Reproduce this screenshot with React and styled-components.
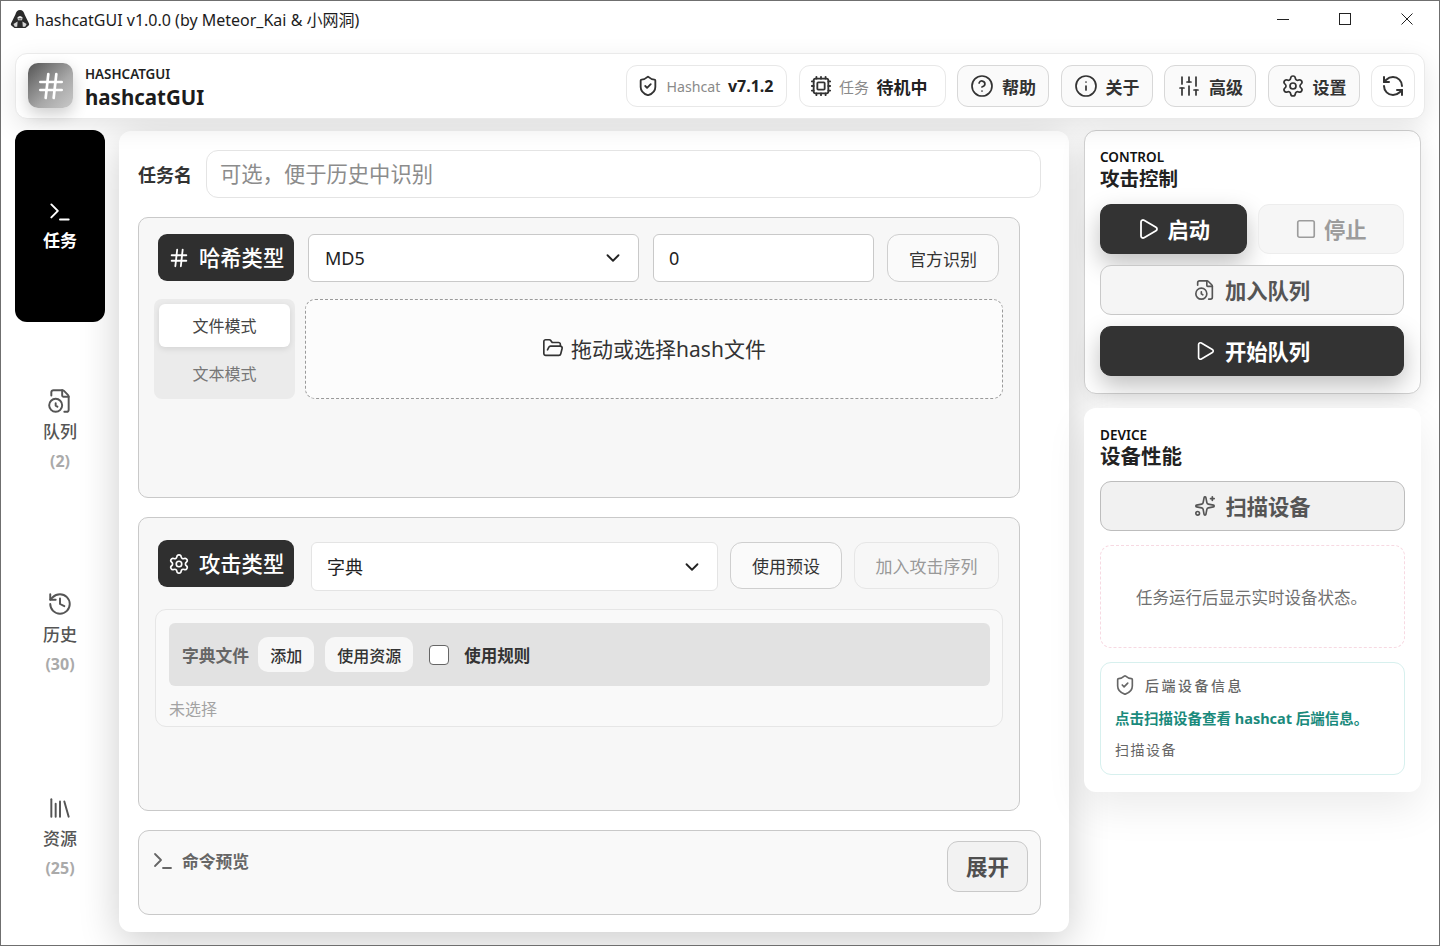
import React from 'react'
import styled, { createGlobalStyle } from 'styled-components'
import {
  ChevronDown,
  CircleHelp,
  Cpu,
  FileClock,
  FolderOpen,
  Hash,
  History,
  Info,
  Library,
  Play,
  RefreshCcw,
  Settings,
  ShieldCheck,
  SlidersVertical,
  Sparkles,
  Square,
  Terminal,
} from 'lucide-react'

const FONT = '"Noto Sans", "Noto Sans CJK SC", sans-serif'

const navItems = [
  { id: 'task', label: '任务', Icon: Terminal, active: true },
  { id: 'queue', label: '队列', count: 2, Icon: FileClock },
  { id: 'history', label: '历史', count: 30, Icon: History },
  { id: 'res', label: '资源', count: 25, Icon: Library },
]

const headerButtons = [
  { label: '帮助', Icon: CircleHelp },
  { label: '关于', Icon: Info },
  { label: '高级', Icon: SlidersVertical },
  { label: '设置', Icon: Settings },
]

export default function App() {
  return (
    <Window>
      <GlobalStyle />
      <TitleBar>
        <TitleLeft>
          <AppLogo />
          <TitleText>hashcatGUI v1.0.0 (by Meteor_Kai &amp; 小网洞)</TitleText>
        </TitleLeft>
        <WindowControls>
          <WindowButton>
            <svg width="12" height="12" viewBox="0 0 12 12">
              <path d="M0 6.5h12" stroke="#222" strokeWidth="1" />
            </svg>
          </WindowButton>
          <WindowButton>
            <svg width="12" height="12" viewBox="0 0 12 12">
              <rect x="0.5" y="0.5" width="11" height="11" fill="none" stroke="#222" strokeWidth="1" />
            </svg>
          </WindowButton>
          <WindowButton>
            <svg width="12" height="12" viewBox="0 0 12 12">
              <path d="M0.5 0.5l11 11M11.5 0.5l-11 11" stroke="#222" strokeWidth="1" />
            </svg>
          </WindowButton>
        </WindowControls>
      </TitleBar>

      <Header>
        <Brand>
          <BrandMark>
            <Hash size={32} strokeWidth={2} />
          </BrandMark>
          <BrandText>
            <BrandEyebrow>HASHCATGUI</BrandEyebrow>
            <BrandName>hashcatGUI</BrandName>
          </BrandText>
        </Brand>
        <HeaderActions>
          <StatusPill $width="161px">
            <ShieldCheck size={22} strokeWidth={2} />
            <PillMuted $size="14.2px">Hashcat</PillMuted>
            <PillStrong $size="16px">v7.1.2</PillStrong>
          </StatusPill>
          <StatusPill $width="147px">
            <Cpu size={22} strokeWidth={2} />
            <PillMuted $size="15px">任务</PillMuted>
            <PillStrong $size="17px">待机中</PillStrong>
          </StatusPill>
          {headerButtons.map(({ label, Icon }) => (
            <HeaderButton key={label}>
              <Icon size={24} strokeWidth={1.7} />
              {label}
            </HeaderButton>
          ))}
          <RefreshButton>
            <RefreshCcw size={24} strokeWidth={2} />
          </RefreshButton>
        </HeaderActions>
      </Header>

      <Body>
        <Sidebar>
          {navItems.map(({ id, label, count, Icon, active }) => (
            <NavItem key={id} $active={active}>
              <Icon size={26} strokeWidth={1.8} />
              <NavLabel $active={active}>{label}</NavLabel>
              {count !== undefined && <NavCount>({count})</NavCount>}
            </NavItem>
          ))}
        </Sidebar>

        <MainCard>
          <NameRow>
            <NameLabel>任务名</NameLabel>
            <NameInput placeholder="可选，便于历史中识别" />
          </NameRow>

          <HashSection>
            <HashTopRow>
              <SectionBadge>
                <Hash size={22} strokeWidth={2} />
                <span>哈希类型</span>
              </SectionBadge>
              <HashSelect>
                MD5
                <ChevronDown size={22} strokeWidth={2} />
              </HashSelect>
              <ValueField defaultValue="0" />
              <OutlineButton $width="112px" $height="48px">官方识别</OutlineButton>
            </HashTopRow>
            <HashInputRow>
              <ModeSwitch>
                <ModeItem $active>文件模式</ModeItem>
                <ModeItem>文本模式</ModeItem>
              </ModeSwitch>
              <DropZone>
                <FolderOpen size={22} strokeWidth={1.8} />
                拖动或选择hash文件
              </DropZone>
            </HashInputRow>
          </HashSection>

          <AttackSection>
            <AttackTopRow>
              <SectionBadge>
                <Settings size={22} strokeWidth={1.8} />
                <span>攻击类型</span>
              </SectionBadge>
              <AttackSelect>
                字典
                <ChevronDown size={22} strokeWidth={2} />
              </AttackSelect>
              <OutlineButton $width="112px" $height="47px" $top="2px">使用预设</OutlineButton>
              <OutlineButton $width="145px" $height="47px" $top="2px" $disabled>加入攻击序列</OutlineButton>
            </AttackTopRow>
            <DictPanel>
              <DictBar>
                <DictLabel>字典文件</DictLabel>
                <ChipButton>添加</ChipButton>
                <ChipButton>使用资源</ChipButton>
                <RuleCheck />
                <RuleLabel>使用规则</RuleLabel>
              </DictBar>
              <DictEmpty>未选择</DictEmpty>
            </DictPanel>
          </AttackSection>

          <PreviewSection>
            <PreviewTitle>
              <Terminal size={24} strokeWidth={1.8} />
              命令预览
            </PreviewTitle>
            <ExpandButton>展开</ExpandButton>
          </PreviewSection>
        </MainCard>

        <SideColumn>
          <ControlCard>
            <CardEyebrow>CONTROL</CardEyebrow>
            <CardTitle $size="19.5px">攻击控制</CardTitle>
            <ControlStack>
              <ButtonPair>
                <ActionButton $variant="dark">
                  <Play size={24} strokeWidth={1.8} />
                  启动
                </ActionButton>
                <ActionButton $variant="disabled">
                  <Square size={22} strokeWidth={1.8} />
                  停止
                </ActionButton>
              </ButtonPair>
              <ActionButton $gap="9px">
                <FileClock size={22} strokeWidth={1.8} />
                加入队列
              </ActionButton>
              <ActionButton $variant="dark" $gap="9px">
                <Play size={22} strokeWidth={1.8} />
                开始队列
              </ActionButton>
            </ControlStack>
          </ControlCard>

          <DeviceCard>
            <CardEyebrow>DEVICE</CardEyebrow>
            <DeviceTitle $size="20.5px">设备性能</DeviceTitle>
            <ScanButton $gap="9px">
              <Sparkles size={22} strokeWidth={1.8} />
              扫描设备
            </ScanButton>
            <DeviceEmpty>任务运行后显示实时设备状态。</DeviceEmpty>
            <BackendBox>
              <BackendHead>
                <ShieldCheck size={22} strokeWidth={1.8} />
                后端设备信息
              </BackendHead>
              <BackendHint>点击扫描设备查看 hashcat 后端信息。</BackendHint>
              <BackendLink>扫描设备</BackendLink>
            </BackendBox>
          </DeviceCard>
        </SideColumn>
      </Body>
    </Window>
  )
}

function AppLogo() {
  return (
    <svg width="20" height="20" viewBox="0 0 20 20">
      <path d="M10 1 C12.5 1 14 3 14.6 5.5 L19 14.5 Q19.6 16 18.4 16.8 L15.5 19 L4.5 19 L1.6 16.8 Q0.4 16 1 14.5 L5.4 5.5 C6 3 7.5 1 10 1 Z" fill="#2b2b2b" />
      <path d="M7.4 8.6 Q10 5.2 12.6 8.6 L12 11.2 L8 11.2 Z" fill="#efefef" />
      <path d="M8.4 9.4 h3.2 v1 h-3.2 Z" fill="#2b2b2b" />
      <path d="M3.4 15 L7.6 12.4 L7.2 17.8 L4.8 17.8 Z M16.6 15 L12.4 12.4 L12.8 17.8 L15.2 17.8 Z" fill="#d4d4d4" />
    </svg>
  )
}

const GlobalStyle = createGlobalStyle`
  html, body {
    margin: 0;
    padding: 0;
    background: #fff;
  }

  * {
    box-sizing: border-box;
  }

  body {
    font-family: ${FONT};
    color: #222;
  }
`

const Window = styled.div`
  width: 1440px;
  height: 946px;
  display: flex;
  flex-direction: column;
  overflow: hidden;
  background: #fff;
  border: 1px solid #6f6f6f;
`

const TitleBar = styled.div`
  height: 38px;
  flex: none;
  padding-bottom: 2px;
  display: flex;
  align-items: center;
  justify-content: space-between;
  position: relative;
  z-index: 3;
  background: #fff;
`

const TitleLeft = styled.div`
  display: flex;
  align-items: center;
  gap: 5px;
  padding-left: 9px;
`

const TitleText = styled.span`
  font-size: 16px;
  color: #1c1c1c;
  white-space: nowrap;
`

const WindowControls = styled.div`
  display: flex;
  padding-right: 1px;
`

const WindowButton = styled.div`
  width: 62px;
  height: 36px;
  display: flex;
  align-items: center;
  justify-content: center;
`

const Header = styled.header`
  height: 66px;
  flex: none;
  margin: 14px 14px 0 14px;
  padding: 0 9px 0 12px;
  display: flex;
  align-items: center;
  justify-content: space-between;
  position: relative;
  z-index: 2;
  background: #fff;
  border: 1px solid #eaeaea;
  border-radius: 12px;
  box-shadow: 0 8px 26px rgba(0, 0, 0, 0.1);
`

const Brand = styled.div`
  display: flex;
  align-items: center;
  gap: 12px;
`

const BrandMark = styled.div`
  width: 45px;
  height: 45px;
  margin-top: -1px;
  display: flex;
  align-items: center;
  justify-content: center;
  border-radius: 10px;
  color: #fff;
  background: linear-gradient(135deg, #555 0%, #a8a8a8 60%, #c9c9c9 100%);
  box-shadow: 0 6px 16px rgba(0, 0, 0, 0.2);
`

const BrandText = styled.div`
  display: flex;
  flex-direction: column;
  padding-top: 7px;
`

const BrandEyebrow = styled.span`
  font-size: 13.4px;
  line-height: 15px;
  font-weight: 600;
  color: #222;
`

const BrandName = styled.span`
  font-size: 20.5px;
  line-height: 31px;
  font-weight: 700;
  color: #1c1c1c;
`

const HeaderActions = styled.div`
  display: flex;
  align-items: center;
  gap: 11.5px;
`

const StatusPill = styled.div`
  width: ${(props) => props.$width};
  height: 42px;
  padding-left: 10px;
  display: flex;
  align-items: center;
  gap: 7.5px;
  background: #fff;
  border: 1px solid #e8e8e8;
  border-radius: 11px;
  color: #333;
`

const PillMuted = styled.span`
  font-size: ${(props) => props.$size};
  color: #8a8a8a;
`

const PillStrong = styled.span`
  font-size: ${(props) => props.$size};
  font-weight: 700;
  color: #222;
`

const HeaderButton = styled.button`
  width: 92px;
  height: 42px;
  padding: 0;
  display: flex;
  align-items: center;
  justify-content: center;
  gap: 8px;
  font-family: inherit;
  font-size: 17px;
  font-weight: 700;
  color: #333;
  background: #fafafa;
  border: 1px solid #d8d8d8;
  border-radius: 11px;
`

const RefreshButton = styled(HeaderButton)`
  width: 44px;
  background: #fff;
  border-color: #e8e8e8;
`

const Body = styled.div`
  flex: 1;
  min-height: 0;
  display: flex;
  padding: 11px 18px 13px 14px;
`

const Sidebar = styled.nav`
  width: 90px;
  flex: none;
  display: flex;
  flex-direction: column;
  gap: 12px;
  margin-right: 14px;
`

const NavItem = styled.div`
  flex: 1;
  display: flex;
  flex-direction: column;
  align-items: center;
  justify-content: center;
  gap: ${(props) => (props.$active ? '4px' : '6px')};
  border-radius: 12px;
  color: ${(props) => (props.$active ? '#fff' : '#555')};
  background: ${(props) => (props.$active ? '#000' : 'transparent')};
`

const NavLabel = styled.span`
  font-size: 17px;
  line-height: 24px;
  font-weight: ${(props) => (props.$active ? 700 : 500)};
`

const NavCount = styled.span`
  margin-top: 1px;
  font-size: 16px;
  line-height: 20px;
  font-weight: 700;
  color: #aaa;
`

const MainCard = styled.main`
  width: 950px;
  flex: none;
  margin-top: 1px;
  padding: 19px 28px 18px 19px;
  display: flex;
  flex-direction: column;
  gap: 19px;
  background: #fff;
  border-radius: 12px;
  box-shadow: 0 10px 40px rgba(0, 0, 0, 0.2);
`

const NameRow = styled.div`
  display: flex;
  align-items: center;
  gap: 14px;
  height: 48px;
  flex: none;
`

const NameLabel = styled.label`
  font-size: 18px;
  font-weight: 700;
  color: #333;
  white-space: nowrap;
`

const NameInput = styled.input`
  flex: 1;
  height: 48px;
  padding: 0 13px 2px;
  font-family: inherit;
  font-size: 21.3px;
  background: #fff;
  border: 1px solid #e4e4e4;
  border-radius: 12px;
  outline: none;

  &::placeholder {
    color: #8c8c8c;
  }
`

const Section = styled.section`
  flex: none;
  display: flex;
  flex-direction: column;
  background: #f7f7f7;
  border: 1px solid #c9c9c9;
  border-radius: 10px;
`

const HashSection = styled(Section)`
  height: 281px;
  margin-right: 21px;
  padding: 16px 16px 0 15px;
  gap: 17px;
`

const AttackSection = styled(Section)`
  height: 294px;
  margin-right: 21px;
  padding: 22px 16px 0 16px;
  gap: 19px;
`

const HashTopRow = styled.div`
  display: flex;
  align-items: flex-start;
  padding: 0 4px;
`

const AttackTopRow = styled.div`
  display: flex;
  align-items: flex-start;
  padding: 0 3px;
  height: 50px;
`

const SectionBadge = styled.div`
  width: 136px;
  height: 47px;
  flex: none;
  padding: 0 0 0 10px;
  display: flex;
  align-items: center;
  gap: 9px;
  font-size: 21.3px;
  font-weight: 500;
  color: #fff;
  background: #2f2f2f;
  border-radius: 9px;

  span {
    margin-top: -2px;
    white-space: nowrap;
  }
`

const SelectBox = styled.div`
  display: flex;
  align-items: center;
  justify-content: space-between;
  padding: 0 14px 0 16px;
  font-size: 18px;
  color: #222;
  background: #fff;
  border-radius: 6px;
`

const HashSelect = styled(SelectBox)`
  width: 331px;
  height: 48px;
  flex: none;
  margin: 0 14px;
  border: 1px solid #c9c9c9;
`

const AttackSelect = styled(SelectBox)`
  width: 407px;
  height: 49px;
  flex: none;
  margin: 2px 12px 0 17px;
  padding: 0 14px 2px 15px;
  border: 1px solid #e4e4e4;

  svg {
    margin-top: 2px;
  }
`

const ValueField = styled.input`
  width: 221px;
  height: 48px;
  flex: none;
  margin-right: 13px;
  padding: 0 15px;
  font-family: inherit;
  font-size: 18px;
  color: #222;
  background: #fff;
  border: 1px solid #c9c9c9;
  border-radius: 6px;
  outline: none;
`

const OutlineButton = styled.button`
  width: ${(props) => props.$width};
  height: ${(props) => props.$height};
  flex: none;
  padding: 0;
  font-family: inherit;
  font-size: 17px;
  color: ${(props) => (props.$disabled ? '#999' : '#333')};
  background: ${(props) => (props.$disabled ? '#f7f7f7' : '#fafafa')};
  border: 1px solid ${(props) => (props.$disabled ? '#e6e6e6' : '#cfcfcf')};
  border-radius: 12px;
  margin-top: ${(props) => props.$top || '0'};
  margin-left: ${(props) => (props.$disabled ? '12px' : '0')};
`

const HashInputRow = styled.div`
  display: flex;
  gap: 10px;
  height: 100px;
`

const ModeSwitch = styled.div`
  width: 141px;
  flex: none;
  padding: 5px;
  display: flex;
  flex-direction: column;
  gap: 5px;
  background: #ebebeb;
  border-radius: 8px;
`

const ModeItem = styled.div`
  flex: 1;
  display: flex;
  align-items: center;
  justify-content: center;
  font-size: 16px;
  color: ${(props) => (props.$active ? '#444' : '#777')};
  background: ${(props) => (props.$active ? '#fff' : 'transparent')};
  border-radius: 6px;
  box-shadow: ${(props) => (props.$active ? '0 2px 6px rgba(0, 0, 0, 0.1)' : 'none')};
`

const DropZone = styled.div`
  flex: 1;
  padding-bottom: 3px;
  display: flex;
  align-items: center;
  justify-content: center;
  gap: 7px;
  font-size: 21px;
  color: #333;
  background: #fcfcfc;
  border: 1px dashed #9a9a9a;
  border-radius: 10px;
`

const DictPanel = styled.div`
  height: 118px;
  padding: 13px 12px 0 13px;
  background: #f9f9f9;
  border: 1px solid #e6e6e6;
  border-radius: 11px;
`

const DictBar = styled.div`
  height: 63px;
  padding: 0 13px;
  display: flex;
  align-items: center;
  background: #e2e2e2;
  border-radius: 6px;
`

const DictLabel = styled.span`
  font-size: 16.8px;
  font-weight: 700;
  color: #666;
  margin-right: 9px;
`

const ChipButton = styled.button`
  height: 35px;
  padding: 0 12px;
  margin-right: 11px;
  font-family: inherit;
  font-size: 16px;
  font-weight: 500;
  color: #333;
  background: #f7f7f7;
  border: none;
  border-radius: 10px;
`

const RuleCheck = styled.span`
  width: 20px;
  height: 20px;
  margin: 0 15px 0 5px;
  background: #fff;
  border: 1px solid #666;
  border-radius: 4px;
`

const RuleLabel = styled.span`
  font-size: 16.5px;
  font-weight: 700;
  color: #333;
`

const DictEmpty = styled.div`
  margin-top: 12px;
  font-size: 16px;
  line-height: 22px;
  color: #a3a3a3;
`

const PreviewSection = styled.section`
  height: 85px;
  flex: none;
  padding: 10px 12px 0 12px;
  display: flex;
  align-items: flex-start;
  justify-content: space-between;
  background: #f9f9f9;
  border: 1px solid #c9c9c9;
  border-radius: 11px;
`

const PreviewTitle = styled.div`
  display: flex;
  align-items: center;
  gap: 7px;
  height: 40px;
  font-size: 16.8px;
  font-weight: 700;
  color: #666;
`

const ExpandButton = styled.button`
  width: 81px;
  height: 51px;
  padding: 0 0 2px;
  font-family: inherit;
  font-size: 21.5px;
  font-weight: 700;
  color: #4f4f4f;
  background: #f2f2f2;
  border: 1px solid #c9c9c9;
  border-radius: 11px;
`

const SideColumn = styled.aside`
  width: 337px;
  flex: none;
  margin-left: 15px;
  display: flex;
  flex-direction: column;
  gap: 14px;
`

const ControlCard = styled.section`
  height: 264px;
  flex: none;
  padding: 18px 16px 0 15px;
  background: #fff;
  border: 1px solid #d0d0d0;
  border-radius: 12px;
  box-shadow: 0 6px 24px rgba(0, 0, 0, 0.1);
`

const DeviceCard = styled.section`
  height: 384px;
  flex: none;
  padding: 19px 16px 0 16px;
  background: #fff;
  border-radius: 12px;
  box-shadow: 0 16px 40px rgba(0, 0, 0, 0.08);
`

const CardEyebrow = styled.div`
  font-size: 13.5px;
  line-height: 17px;
  font-weight: 600;
  color: #111;
`

const CardTitle = styled.div`
  font-size: ${(props) => props.$size};
  line-height: 26px;
  font-weight: 700;
  color: #222;
`

const DeviceTitle = styled(CardTitle)`
  margin-top: -1px;
  margin-bottom: 1px;
`

const ControlStack = styled.div`
  margin-top: 12px;
  display: flex;
  flex-direction: column;
  gap: 11px;
`

const ButtonPair = styled.div`
  display: grid;
  grid-template-columns: 1fr 1fr;
  gap: 11px;
`

const variants = {
  dark: 'color: #fff; background: #333; border-color: #333; box-shadow: 0 10px 24px rgba(0, 0, 0, 0.25);',
  disabled: 'color: #9c9c9c; background: #f6f6f6; border-color: #ededed;',
  outline: 'color: #555; background: #f5f5f5; border-color: #c9c9c9;',
}

const ActionButton = styled.button`
  height: 50px;
  padding: 0 0 2px;
  display: flex;
  align-items: center;
  justify-content: center;
  gap: ${(props) => props.$gap || '7px'};
  font-family: inherit;
  font-size: 21.3px;
  font-weight: 700;
  border: 1px solid;
  border-radius: 11px;
  ${(props) => variants[props.$variant || 'outline']}

  svg {
    margin-top: 2px;
  }
`

const ScanButton = styled(ActionButton)`
  width: 100%;
  margin-top: 12px;
  color: #555;
  background: #f1f1f1;
  border-color: #bdbdbd;
`

const DeviceEmpty = styled.div`
  height: 103px;
  margin-top: 14px;
  display: flex;
  align-items: center;
  justify-content: center;
  padding-right: 2px;
  font-size: 16.5px;
  color: #707070;
  border: 1px dashed #f7d9e2;
  border-radius: 11px;
`

const BackendBox = styled.div`
  height: 113px;
  margin-top: 14px;
  padding: 11px 14px 0 14px;
  border: 1px solid #d7f0ee;
  border-radius: 11px;
`

const BackendHead = styled.div`
  display: flex;
  align-items: center;
  gap: 9px;
  height: 22px;
  font-size: 14px;
  font-weight: 500;
  letter-spacing: 2.5px;
  color: #666;

  svg {
    margin-left: -1px;
  }
`

const BackendHint = styled.div`
  margin-top: 12px;
  font-size: 14.5px;
  line-height: 21px;
  font-weight: 700;
  color: #1a8a7c;
  white-space: nowrap;
`

const BackendLink = styled.div`
  margin-top: 11px;
  font-size: 14px;
  line-height: 20px;
  letter-spacing: 1.5px;
  color: #666;
`
